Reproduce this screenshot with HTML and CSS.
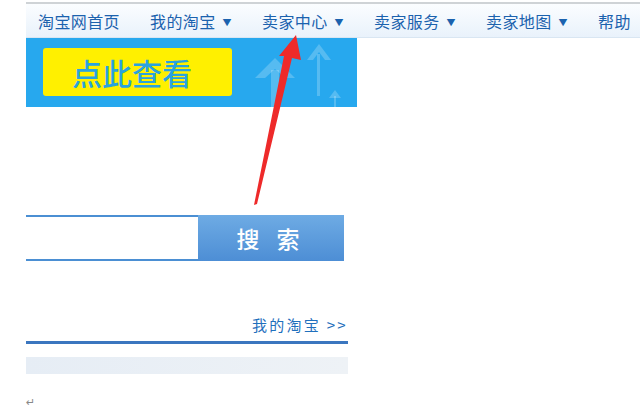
FILE: index.html
```html
<!DOCTYPE html>
<html lang="zh-CN">
<head>
    <meta charset="UTF-8">
    <title>淘宝网 卖家中心</title>
    <link rel="stylesheet" href="styles.css">
</head>
<body>
    <div class="page">
        <div class="nav">
            <a class="nav-item">淘宝网首页</a>
            <a class="nav-item">我的淘宝 <span class="caret">▼</span></a>
            <a class="nav-item">卖家中心 <span class="caret">▼</span></a>
            <a class="nav-item">卖家服务 <span class="caret">▼</span></a>
            <a class="nav-item">卖家地图 <span class="caret">▼</span></a>
            <a class="nav-item">帮助</a>
        </div>

        <div class="main">
            <div class="banner">
                <div class="banner-btn">点此查看</div>
                <svg class="banner-arrows" width="120" height="69" viewBox="0 0 120 69">
                    <g fill="#ffffff" fill-opacity="0.22">
                        <polygon points="18,40 38,20 58,40 48,40 38,31 28,40"/>
                        <rect x="34" y="32" width="8" height="37"/>
                        <polygon points="70,22 82,6 94,22 88,22 82,14 76,22"/>
                        <rect x="80" y="16" width="3" height="42"/>
                        <polygon points="92,60 98,52 104,60"/>
                        <rect x="97" y="58" width="2" height="11"/>
                    </g>
                </svg>
            </div>

            <div class="search">
                <div class="search-input"></div>
                <div class="search-btn">搜 索</div>
            </div>

            <div class="more">
                <a class="more-link">我的淘宝 &gt;&gt;</a>
            </div>
            <div class="rule"></div>
            <div class="gray-bar"></div>
            <div class="mark">↵</div>
        </div>

        <svg class="pointer" width="640" height="411" viewBox="0 0 640 411">
            <polygon fill="#ee2a2a" points="296,35 301,60 292,58 257,204 254,205 284,56 279,56"/>
        </svg>
    </div>
</body>
</html>
```

FILE: styles.css
```css
body {
    margin: 0;
    background-color: #ffffff;
    font-family: "Noto Sans CJK SC", "Liberation Sans", sans-serif;
}
.page {
    position: relative;
    width: 640px;
    height: 411px;
    padding-left: 26px;
    padding-top: 2px;
    box-sizing: border-box;
    overflow: hidden;
}
.nav {
    display: flex;
    align-items: center;
    height: 33px;
    padding-left: 12px;
    border-top: 2px solid #cfd3d6;
    border-bottom: 1px solid #d9e6f2;
    background: linear-gradient(#fbfdff, #e9f2fb);
    white-space: nowrap;
}
.nav-item {
    font-size: 16px;
    color: #1b62ae;
    margin-right: 30px;
    letter-spacing: 0.4px;
}
.caret {
    font-size: 9px;
    position: relative;
    top: -2px;
    margin-left: 3px;
}
.main {
    width: 331px;
}
.banner {
    display: flex;
    align-items: flex-start;
    height: 69px;
    background-color: #27a8ee;
}
.banner-btn {
    width: 189px;
    height: 48px;
    margin: 10px 0 0 17px;
    padding-left: 29px;
    box-sizing: border-box;
    background-color: #fff000;
    border-radius: 3px;
    color: #2aa3de;
    font-size: 30px;
    font-weight: 500;
    line-height: 48px;
}
.banner-arrows {
    margin-left: 5px;
}
.search {
    display: flex;
    margin-top: 108px;
    height: 46px;
}
.search-input {
    width: 172px;
    border-top: 2px solid #4b8fd3;
    border-bottom: 2px solid #4b8fd3;
    box-sizing: border-box;
    background-color: #ffffff;
}
.search-btn {
    width: 146px;
    background: linear-gradient(#6eabe4, #4d8ed5);
    color: #ffffff;
    font-size: 23px;
    font-weight: 500;
    line-height: 46px;
    text-align: center;
    letter-spacing: 6px;
}
.more {
    display: flex;
    justify-content: flex-end;
    margin-top: 53px;
    padding-right: 9px;
}
.more-link {
    font-size: 15px;
    color: #1f70bd;
    letter-spacing: 2.3px;
}
.rule {
    width: 322px;
    height: 3px;
    margin-top: 6px;
    background-color: #3b76bf;
}
.gray-bar {
    width: 322px;
    height: 17px;
    margin-top: 13px;
    background: linear-gradient(90deg, #e6edf5, #eef2f6);
}
.mark {
    margin-top: 22px;
    font-size: 11px;
    color: #888888;
    font-family: "DejaVu Sans", sans-serif;
}
.pointer {
    position: absolute;
    left: 0;
    top: 0;
}
```
